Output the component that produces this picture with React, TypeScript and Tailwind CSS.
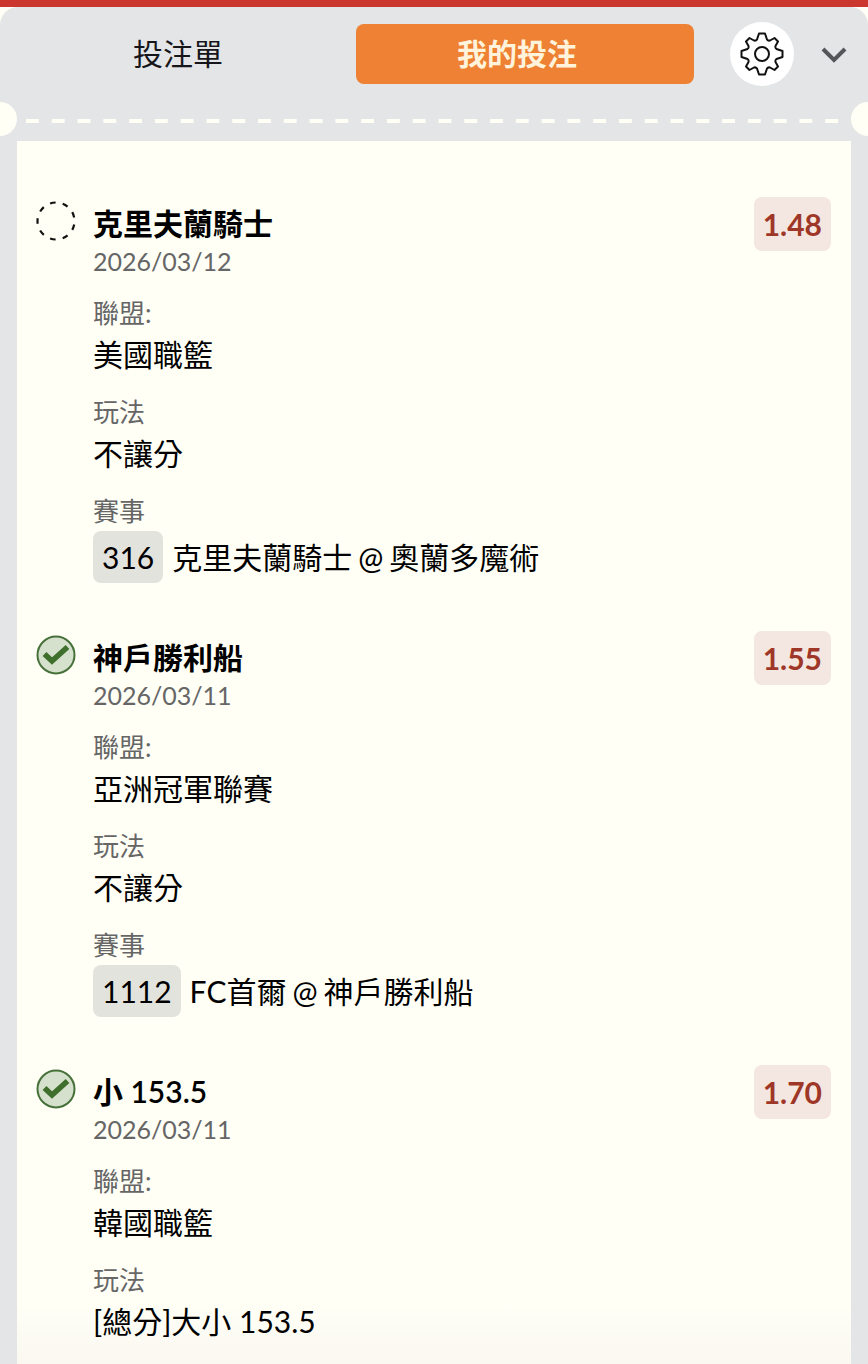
import { useState } from 'react';
import clsx from 'clsx';

type BetStatus = 'pending' | 'won';

interface Bet {
  id: number;
  status: BetStatus;
  title: string;
  date: string;
  odds: string;
  league: string;
  market: string;
  match?: { code: string; away: string; home: string };
}

const bets: Bet[] = [
  {
    id: 1,
    status: 'pending',
    title: '克里夫蘭騎士',
    date: '2026/03/12',
    odds: '1.48',
    league: '美國職籃',
    market: '不讓分',
    match: { code: '316', away: '克里夫蘭騎士', home: '奧蘭多魔術' },
  },
  {
    id: 2,
    status: 'won',
    title: '神戶勝利船',
    date: '2026/03/11',
    odds: '1.55',
    league: '亞洲冠軍聯賽',
    market: '不讓分',
    match: { code: '1112', away: 'FC首爾', home: '神戶勝利船' },
  },
  {
    id: 3,
    status: 'won',
    title: '小 153.5',
    date: '2026/03/11',
    odds: '1.70',
    league: '韓國職籃',
    market: '[總分]大小 153.5',
  },
];

const GearIcon = () => (
  <svg viewBox="-24 -24 48 48" className="size-12" fill="none" stroke="#111" strokeWidth="2" strokeLinejoin="round" aria-hidden="true">
    <path d="M-3 -20.5H3L5 -14.5Q6 -13 8 -13.5L12.5 -16L16 -12.5L13.5 -8Q13 -6 14.5 -5L20.5 -3V3L14.5 5Q13 6 13.5 8L16 12.5L12.5 16L8 13.5Q6 13 5 14.5L3 20.5H-3L-5 14.5Q-6 13 -8 13.5L-12.5 16L-16 12.5L-13.5 8Q-13 6 -14.5 5L-20.5 3V-3L-14.5 -5Q-13 -6 -13.5 -8L-16 -12.5L-12.5 -16L-8 -13.5Q-6 -13 -5 -14.5Z" />
    <circle r="7" />
  </svg>
);

const ChevronIcon = () => (
  <svg viewBox="0 0 28 28" className="size-7" fill="none" stroke="#55555a" strokeWidth="4" aria-hidden="true">
    <path d="M3 9L14 20L25 9" />
  </svg>
);

const StatusIcon = ({ status }: { status: BetStatus }) => {
  if (status === 'pending') {
    return (
      <svg viewBox="0 0 40 40" className="size-10" role="img" aria-label="pending">
        <circle
          cx="20"
          cy="20"
          r="18.5"
          fill="none"
          stroke="#111"
          strokeWidth="2.200"
          pathLength="90"
          strokeDasharray="4.4 5.6"
          strokeDashoffset="2.2"
          transform="rotate(180 20 20)"
        />
      </svg>
    );
  }
  return (
    <svg viewBox="0 0 40 40" className="size-10" role="img" aria-label="won">
      <circle cx="20" cy="20" r="18.5" fill="#d5e1cc" stroke="#47713a" strokeWidth="2" />
      <path d="M8.500 19L16 26L31.500 12" fill="none" stroke="#3f6f2c" strokeWidth="5.5" />
    </svg>
  );
};

const Field = ({ label, children }: { label: string; children: React.ReactNode }) => (
  <div>
    <dt className="text-[26px] leading-10 text-[#666]">{label}</dt>
    <dd className="text-[30px] leading-[42px]">{children}</dd>
  </div>
);

const BetItem = ({ bet }: { bet: Bet }) => (
  <li className="flex items-start">
    <div className="-mt-1 mr-[17px] shrink-0">
      <StatusIcon status={bet.status} />
    </div>
    <div className="min-w-0 flex-1">
      <h2 className="text-[30px] leading-9 font-semibold">{bet.title}</h2>
      <p className="text-[25px] leading-10 text-[#666]">{bet.date}</p>
      <dl className="mt-3 space-y-[17px]">
        <Field label="聯盟:">{bet.league}</Field>
        <Field label="玩法">{bet.market}</Field>
        {bet.match && (
          <Field label="賽事">
            <div className="flex items-center gap-[9px]">
              <span className="rounded-lg bg-[#e3e3dd] px-[9px] leading-[52px]">{bet.match.code}</span>
              <div className="flex gap-[6px]">
                <span>{bet.match.away}</span>
                <span>@</span>
                <span>{bet.match.home}</span>
              </div>
            </div>
          </Field>
        )}
      </dl>
    </div>
    <span className="-mt-2 rounded-lg bg-[#f4e7e1] px-[9px] text-[30px] leading-[54px] font-bold text-[#9f3728]">
      {bet.odds}
    </span>
  </li>
);

const tabs = ['投注單', '我的投注'];

export default function App() {
  const [active, setActive] = useState('我的投注');

  return (
    <div
      lang="zh-Hant"
      className="flex min-h-screen flex-col border-t-[7px] border-[#cb372e] bg-[#fffff6] font-['Lato','Noto_Sans_CJK_TC',sans-serif] text-black"
    >
      <div className="flex flex-1 flex-col overflow-hidden rounded-t-[18px] bg-[#e4e5e7]">
        <header className="flex items-center pt-[15px] pr-5 pl-[9px]">
          <div role="tablist" className="grid flex-1 grid-cols-2 gap-[9px]">
            {tabs.map(tab => (
              <button
                key={tab}
                type="button"
                role="tab"
                aria-selected={tab === active}
                onClick={() => setActive(tab)}
                className={clsx(
                  'h-[60px] rounded-lg pb-0.5 text-[30px]',
                  tab === active ? 'bg-[#ee8133] pr-4 font-semibold text-[#fff3dc]' : 'text-[#16161a]'
                )}
              >
                {tab}
              </button>
            ))}
          </div>
          <button type="button" aria-label="設定" className="ml-9 flex size-16 items-center justify-center rounded-full bg-white">
            <GearIcon />
          </button>
          <button type="button" aria-label="收合" className="ml-[26px]">
            <ChevronIcon />
          </button>
        </header>

        {/* ticket perforation */}
        <div className="mt-4 mb-[5px] flex items-center">
          <div className="h-[34px] w-[17px] rounded-r-full bg-[#fffff6]" />
          <div className="mt-1 ml-[9px] h-1 flex-1 bg-[linear-gradient(90deg,#fffff6_50%,transparent_50%)] bg-size-[26px_100%] bg-repeat-round" />
          <div className="h-[34px] w-[17px] rounded-l-full bg-[#fffff6]" />
        </div>

        <main className="mx-[17px] flex-1 bg-[linear-gradient(to_top,#faf8f1,#fffff6_60px)] pt-16 pr-5 pb-4 pl-[19px]">
          <ul className="space-y-14">
            {bets.map(bet => (
              <BetItem key={bet.id} bet={bet} />
            ))}
          </ul>
        </main>
      </div>
    </div>
  );
}
